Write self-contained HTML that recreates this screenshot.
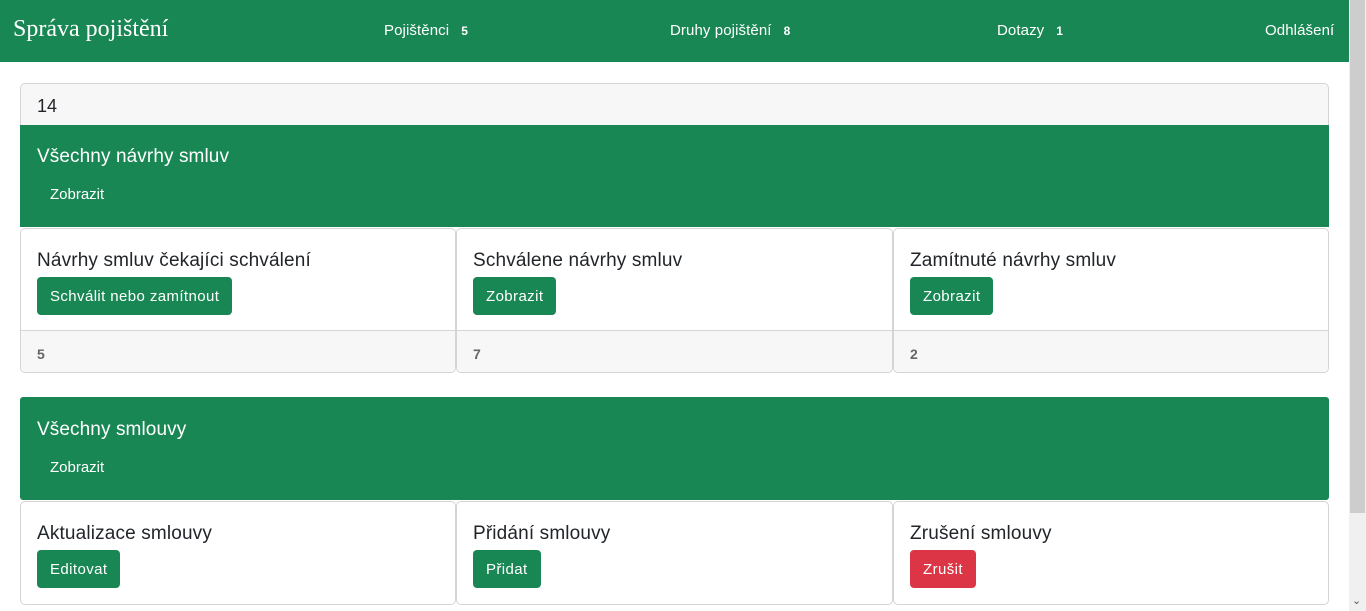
<!DOCTYPE html>
<html><head><meta charset="utf-8"><style>
*{box-sizing:border-box;margin:0;padding:0}
body{width:1366px;height:611px;overflow:hidden;background:#fff;font-family:"Liberation Sans",sans-serif;color:#212529;position:relative}
.a{position:absolute}
.nav{left:0;top:0;width:1349px;height:62px;background:#198754;color:#fff}
.nav .t{position:absolute;font-family:"Liberation Serif",serif;font-size:24px;top:16px;left:13px}
.nav .l{position:absolute;top:22px;font-size:15px;letter-spacing:.1px}
.nav b{font-size:12px;margin-left:12px}
.g{background:#198754;color:#fff;left:20px;width:1309px;border-radius:3px}
.g .h{position:absolute;left:17px;font-size:19px;letter-spacing:.1px}
.g .z{position:absolute;left:30px;font-size:15px}
.c{border:1px solid #d4d4d4;border-radius:5px;background:#fff}
.c .h{position:absolute;left:16px;top:21px;font-size:19px;letter-spacing:.15px}
.btn{position:absolute;left:16px;top:48px;height:38px;padding:0 13px;line-height:40px;color:#fff;background:#198754;border-radius:4px;font-size:15px;letter-spacing:.4px}
.f{position:absolute;left:0;right:0;bottom:0;height:42px;background:#f7f7f7;border-top:1px solid #d4d4d4;border-radius:0 0 5px 5px;font-weight:bold;color:#666;font-size:14px;padding:15px 16px}
</style></head><body>
<div class="a nav"><span class="t">Správa pojištění</span>
<span class="l" style="left:384px">Pojištěnci<b>5</b></span>
<span class="l" style="left:670px">Druhy pojištění<b>8</b></span>
<span class="l" style="left:997px">Dotazy<b>1</b></span>
<span class="l" style="left:1265px">Odhlášení</span></div>
<div class="a" style="left:20px;top:83px;width:1309px;height:43px;background:#f7f7f7;border:1px solid #d4d4d4;border-radius:5px 5px 0 0;font-size:18px;padding:12px 16px">14</div>
<div class="a g" style="top:125px;height:102px;border-radius:0"><span class="h" style="top:21px">Všechny návrhy smluv</span><span class="z" style="top:61px">Zobrazit</span></div>
<div class="a c" style="left:20px;top:228px;width:436px;height:145px"><span class="h">Návrhy smluv čekajíci schválení</span><span class="btn">Schválit nebo zamítnout</span><div class="f">5</div></div>
<div class="a c" style="left:456px;top:228px;width:437px;height:145px"><span class="h">Schválene návrhy smluv</span><span class="btn">Zobrazit</span><div class="f">7</div></div>
<div class="a c" style="left:893px;top:228px;width:436px;height:145px"><span class="h">Zamítnuté návrhy smluv</span><span class="btn">Zobrazit</span><div class="f">2</div></div>
<div class="a g" style="top:397px;height:103px"><span class="h" style="top:22px">Všechny smlouvy</span><span class="z" style="top:62px">Zobrazit</span></div>
<div class="a c" style="left:20px;top:501px;width:436px;height:104px"><span class="h">Aktualizace smlouvy</span><span class="btn">Editovat</span></div>
<div class="a c" style="left:456px;top:501px;width:437px;height:104px"><span class="h">Přidání smlouvy</span><span class="btn">Přidat</span></div>
<div class="a c" style="left:893px;top:501px;width:436px;height:104px"><span class="h">Zrušení smlouvy</span><span class="btn" style="background:#dc3545">Zrušit</span></div>
<div class="a" style="left:1349px;top:0;width:17px;height:611px;background:#f0f0f0"></div>
<div class="a" style="left:1350px;top:0;width:15px;height:513px;background:#cdcdcd"></div>
<div class="a" style="left:1352px;top:594px;font-size:11px;color:#555">&#8964;</div>
</body></html>
